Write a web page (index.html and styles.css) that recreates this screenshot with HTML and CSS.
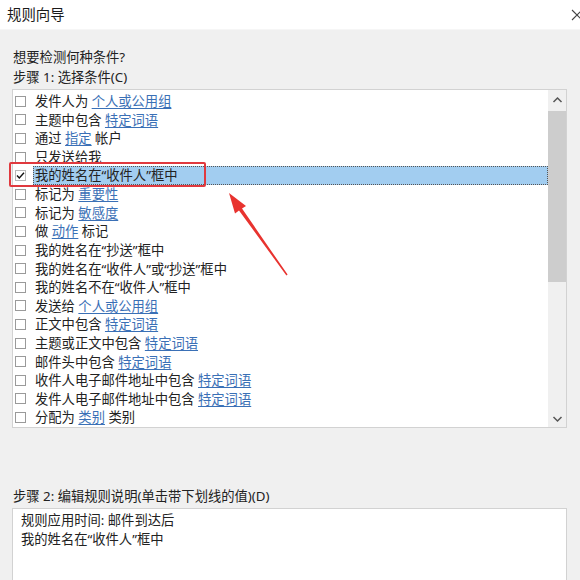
FILE: index.html
```html
<!DOCTYPE html>
<html lang="zh-CN">
<head>
<meta charset="utf-8">
<title>规则向导</title>
<link rel="stylesheet" href="styles.css">
</head>
<body>
<div class="window">
  <div class="titlebar">
    <span class="title">规则向导</span>
    <svg class="close" width="12" height="12" viewBox="0 0 12 12"><path d="M1 1 L11 11 M11 1 L1 11" stroke="#444" stroke-width="1.1" fill="none"/></svg>
  </div>
  <div class="content">
    <div class="label q">想要检测何种条件?</div>
    <div class="label">步骤 1: 选择条件(C)</div>
    <div class="listbox">
      <div class="rows">
        <div class="row"><span class="cb"></span><span class="txt">发件人为 <a>个人或公用组</a></span></div>
        <div class="row"><span class="cb"></span><span class="txt">主题中包含 <a>特定词语</a></span></div>
        <div class="row"><span class="cb"></span><span class="txt">通过 <a>指定</a> 帐户</span></div>
        <div class="row"><span class="cb"></span><span class="txt">只发送给我</span></div>
        <div class="row"><span class="cb checked"><svg width="11" height="11" viewBox="0 0 11 11"><path d="M2 5.6 L4.3 8 L9 2.8" stroke="#111" stroke-width="1.4" fill="none"/></svg></span><span class="txt sel">我的姓名在“收件人”框中</span></div>
        <div class="row"><span class="cb"></span><span class="txt">标记为 <a>重要性</a></span></div>
        <div class="row"><span class="cb"></span><span class="txt">标记为 <a>敏感度</a></span></div>
        <div class="row"><span class="cb"></span><span class="txt">做 <a>动作</a> 标记</span></div>
        <div class="row"><span class="cb"></span><span class="txt">我的姓名在“抄送”框中</span></div>
        <div class="row"><span class="cb"></span><span class="txt">我的姓名在“收件人”或“抄送”框中</span></div>
        <div class="row"><span class="cb"></span><span class="txt">我的姓名不在“收件人”框中</span></div>
        <div class="row"><span class="cb"></span><span class="txt">发送给 <a>个人或公用组</a></span></div>
        <div class="row"><span class="cb"></span><span class="txt">正文中包含 <a>特定词语</a></span></div>
        <div class="row"><span class="cb"></span><span class="txt">主题或正文中包含 <a>特定词语</a></span></div>
        <div class="row"><span class="cb"></span><span class="txt">邮件头中包含 <a>特定词语</a></span></div>
        <div class="row"><span class="cb"></span><span class="txt">收件人电子邮件地址中包含 <a>特定词语</a></span></div>
        <div class="row"><span class="cb"></span><span class="txt">发件人电子邮件地址中包含 <a>特定词语</a></span></div>
        <div class="row"><span class="cb"></span><span class="txt">分配为 <a>类别</a> 类别</span></div>
      </div>
      <div class="scrollbar">
        <svg class="arrow-btn" width="17" height="17" viewBox="0 0 17 17"><path d="M4.5 10 L8.5 6 L12.5 10" stroke="#555" stroke-width="1.5" fill="none"/></svg>
        <div class="track"><div class="thumb"></div></div>
        <svg class="arrow-btn" width="17" height="17" viewBox="0 0 17 17"><path d="M4.5 7 L8.5 11 L12.5 7" stroke="#555" stroke-width="1.5" fill="none"/></svg>
      </div>
    </div>
    <div class="label step2">步骤 2: 编辑规则说明(单击带下划线的值)(D)</div>
    <div class="desc">
      <div>规则应用时间: 邮件到达后</div>
      <div>我的姓名在“收件人”框中</div>
    </div>
  </div>
  <div class="redbox"></div>
  <svg class="annot" width="580" height="580" viewBox="0 0 580 580">
    <polygon points="229,193 246,206 242,208.6 287.6,274.6 286.4,275.4 239,210.6 235,213.4" fill="#e8332f"/>
  </svg>
</div>
</body>
</html>
```

FILE: styles.css
```css
* { box-sizing: border-box; }
html, body { margin: 0; padding: 0; }
body {
  width: 580px;
  height: 580px;
  overflow: hidden;
  background: #f0f0f0;
  font-family: "Noto Sans", "Noto Sans CJK SC", sans-serif;
  font-size: 13.3px;
  color: #222;
}
.window { position: relative; width: 580px; height: 580px; }
.titlebar {
  height: 30px;
  background: #fff;
  border-bottom: 1px solid #f6f6f6;
  display: flex;
  align-items: center;
  justify-content: space-between;
  padding-left: 7px;
}
.title { font-size: 14.4px; line-height: 20px; color: #1a1a1a; }
.close { margin-right: -3px; }
.content { padding: 0 13px 0 12px; }
.label { line-height: 20px; height: 20px; white-space: nowrap; }
.q { margin-top: 17px; padding-left: 1px; }
.label { padding-left: 1px; }
.listbox {
  margin-top: 2px;
  height: 339px;
  background: #fff;
  border: 1px solid #d2d2d2;
  display: flex;
}
.rows { flex: 1; padding-top: 2px; }
.row {
  height: 18.6px;
  display: flex;
  align-items: center;
  padding-left: 2px;
}
.cb {
  width: 11px;
  height: 11px;
  border: 1px solid #9a9a9a;
  background: #fff;
  flex: none;
  display: flex;
}
.cb.checked { border-color: #b8b8b8; }
.cb svg { margin: -1px; }
.txt {
  margin-left: 7px;
  padding-left: 2px;
  line-height: 18px;
  white-space: nowrap;
}
.txt a { color: #3a70b6; text-decoration: underline; text-underline-offset: 2px; }
.txt.sel {
  flex: 1;
  background: #a2cdf0;
  outline: 1px dotted #555;
  outline-offset: -1px;
  height: 19px;
  line-height: 19px;
  margin-right: 0;
}
.scrollbar {
  width: 18px;
  background: #f0f0f0;
  display: flex;
  flex-direction: column;
  align-items: center;
}
.arrow-btn { flex: none; margin-top: 2px; }
.track { flex: 1; width: 100%; }
.thumb { height: 171px; margin-top: 2px; background: #cdcdcd; }
.step2 { margin-top: 58px; }
.desc {
  margin-top: 2px;
  height: 80px;
  background: #fff;
  border: 1px solid #d2d2d2;
  border-bottom: none;
  padding: 2px 8px;
  line-height: 19px;
}
.redbox {
  position: absolute;
  left: 9px;
  top: 162px;
  width: 197px;
  height: 25px;
  border: 2px solid #e0393e;
  border-radius: 2px;
}
.annot { position: absolute; left: 0; top: 0; pointer-events: none; }
```
